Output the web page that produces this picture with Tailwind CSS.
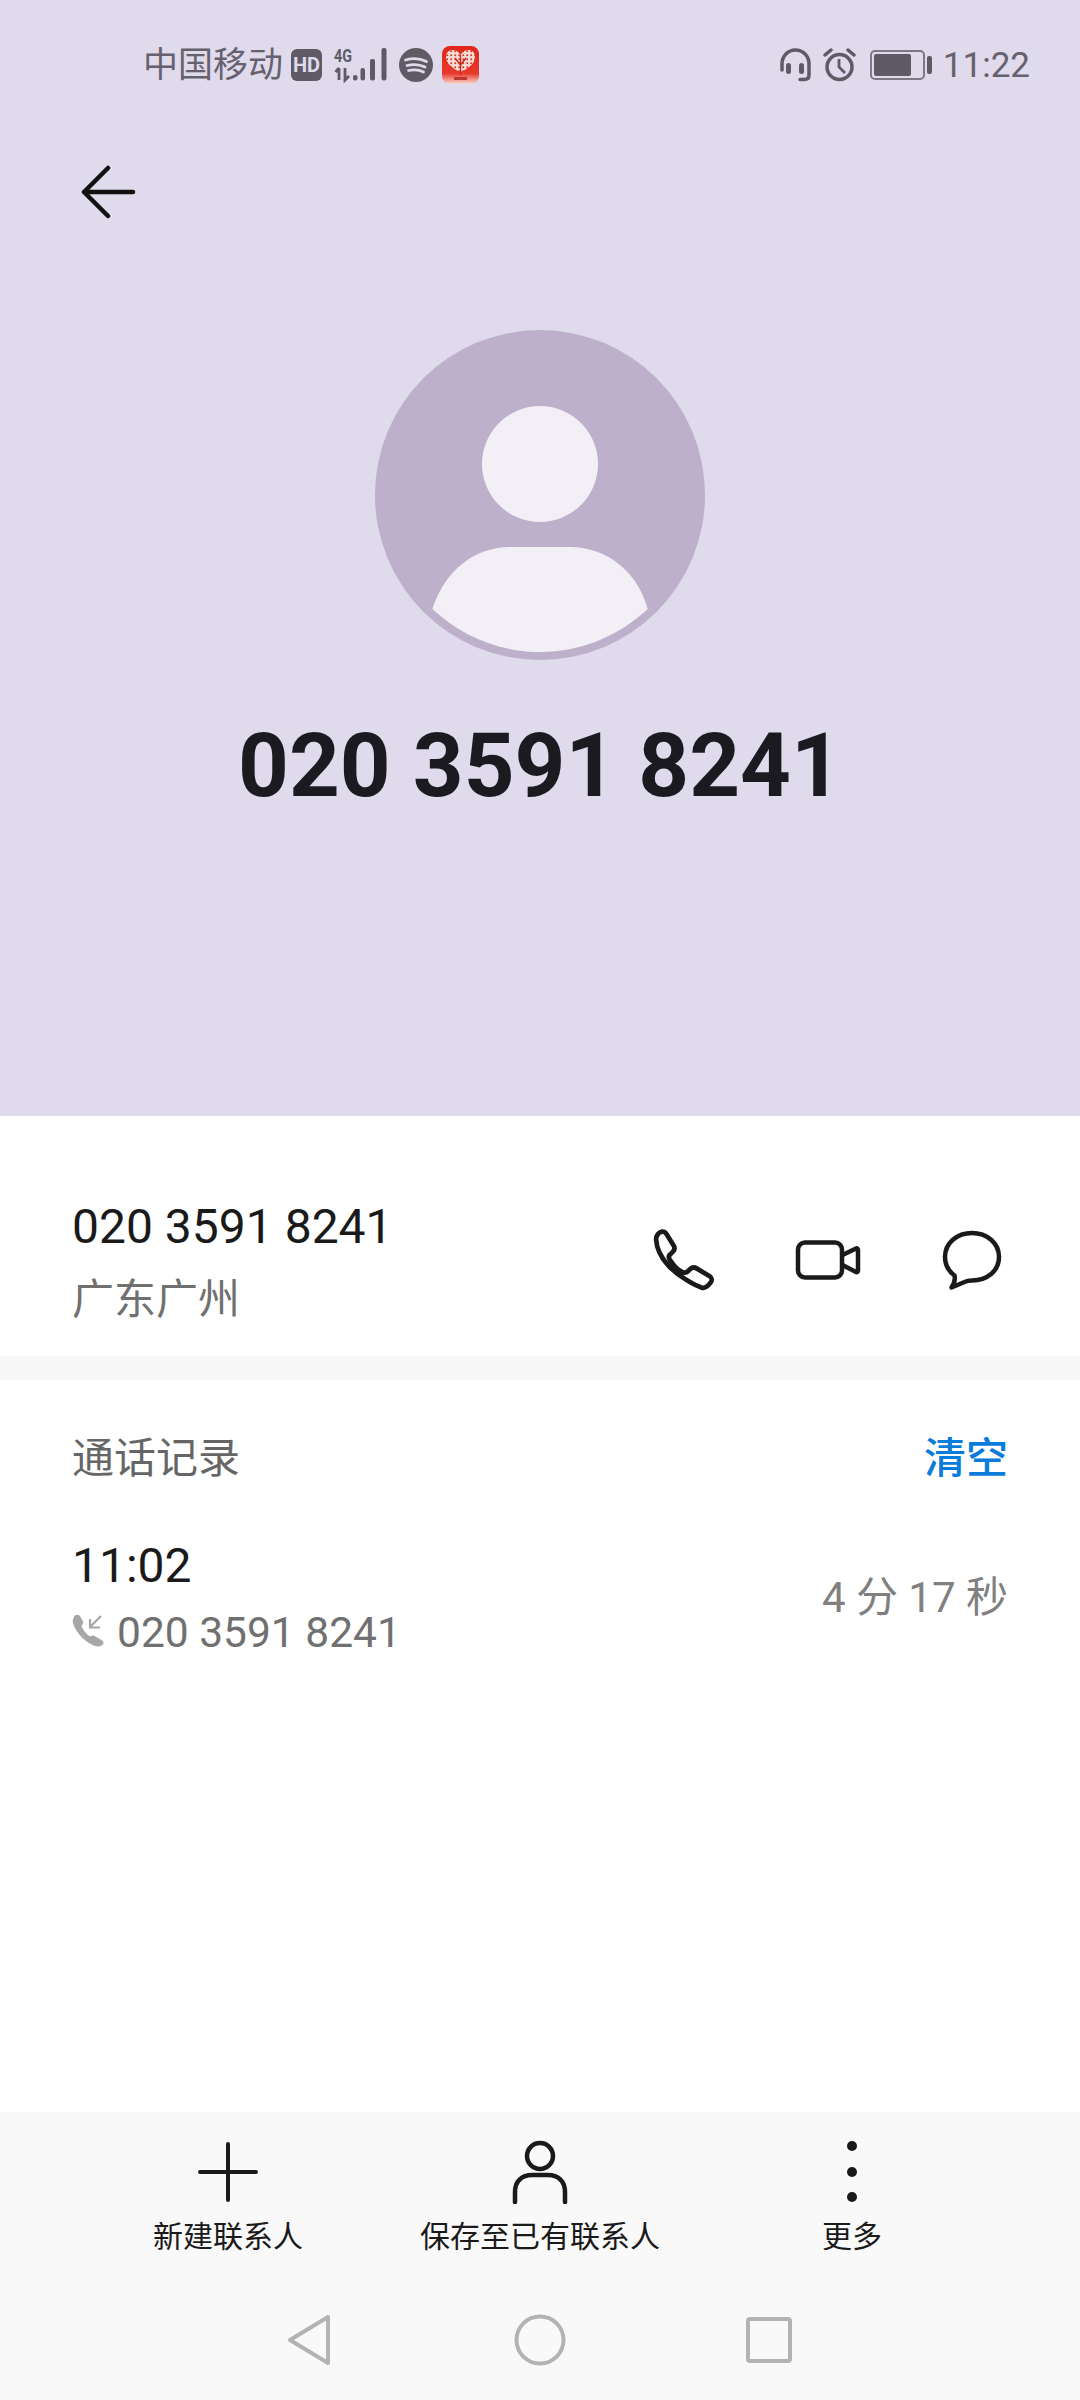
<!DOCTYPE html>
<html lang="zh">

<head>
  <meta charset="utf-8">
  <script src="https://cdn.jsdelivr.net/npm/@tailwindcss/browser@4"></script>
</head>

<body class="w-[1080px] h-[2400px] flex flex-col bg-white overflow-hidden font-['Roboto','Noto_Sans_CJK_SC',sans-serif]">
  <!-- header -->
  <header class="h-[1116px] shrink-0 bg-[#dfdaec] flex flex-col">
    <div class="h-[130px] shrink-0 flex items-center justify-between pl-[143px] pr-[50px] text-[#66616d]">
      <div class="flex items-center">
        <span class="text-[35px] leading-none">中国移动</span>
        <div class="ml-[8px] w-[31px] h-[32px] rounded-[6px] bg-[#5f5b66] flex items-center justify-center text-[#dfdaec] text-[20px] font-bold leading-none">HD</div>
        <svg class="ml-[11px] overflow-visible" width="54" height="36" viewBox="0 0 54 36" fill="#5f5b66">
          <text x="1" y="15" font-family="Roboto" font-size="19" font-weight="700" textLength="18" lengthAdjust="spacingAndGlyphs">4G</text>
          <path d="M6 21v12M2.500 25L6 21M12 21v12l4-4" fill="none" stroke="#5f5b66" stroke-width="2.800" />
          <rect x="20" y="28" width="4.500" height="5.500" rx="2" />
          <rect x="27.500" y="21" width="4.500" height="12.500" rx="2" />
          <rect x="37" y="12" width="5" height="21.500" rx="2" />
          <rect x="48.500" y="1" width="5" height="32.500" rx="2" />
        </svg>
        <svg class="ml-[12px]" width="34" height="34" viewBox="0 0 34 34">
          <circle cx="17" cy="17" r="17" fill="#5f5b66" />
          <path d="M6.500 12c7-2 15-1.500 21 1.500M8 17.500c6-1.500 13-1 18 1.500M9.500 22.500c5-1 11-.7 15 1.500" fill="none" stroke="#dfdaec" stroke-width="2.800" stroke-linecap="round" />
        </svg>
        <svg class="ml-[9px]" width="37" height="38" viewBox="0 0 37 38">
          <defs>
            <linearGradient id="appBg" x1="0" y1="0" x2="0" y2="1">
              <stop offset="0" stop-color="#e0261b" />
              <stop offset=".72" stop-color="#e8392a" />
              <stop offset="1" stop-color="#f8d8d0" />
            </linearGradient>
            <pattern id="appDots" width="4" height="4" patternUnits="userSpaceOnUse">
              <rect width="4" height="4" fill="#f7dcd6" />
              <circle cx="1.200" cy="1.200" r="1" fill="#d83a2c" />
            </pattern>
          </defs>
          <rect width="37" height="38" rx="8" fill="url(#appBg)" />
          <path d="M18.500 26C11 22.500 4 18 4 11c0-4.500 3-7 6.500-7 3.500 0 6.500 2 8 5 1.500-3 4.500-5 8-5C30 4 33 6.500 33 11c0 7-7 11.500-14.500 15z" fill="url(#appDots)" />
          <path d="M18.500 9v20M13 12l5.500 7 5.500-7" stroke="#c92a1d" stroke-width="1.400" fill="none" />
          <rect x="12" y="31" width="13" height="3" fill="#b9372d" />
        </svg>
      </div>
      <div class="flex items-center">
        <svg width="33" height="34" viewBox="0 0 33 34" fill="none" stroke="#5f5b66">
          <path d="M3 22V16C3 8 9 2 16.500 2S30 8 30 16v11c0 3-2 4.500-4.500 4.500H21" stroke-width="3.500" stroke-linecap="round" />
          <rect x="7" y="15" width="5" height="11" rx="2.500" fill="#5f5b66" stroke="none" />
          <rect x="20" y="15" width="5" height="11" rx="2.500" fill="#5f5b66" stroke="none" />
        </svg>
        <svg class="ml-[11px]" width="33" height="34" viewBox="0 0 33 34" fill="none" stroke="#5f5b66" stroke-width="3.500">
          <circle cx="16.500" cy="19" r="12.500" />
          <path d="M16 11v8l6 6" stroke-width="2.800" />
          <path d="M2 7l6-5M31 7l-6-5" stroke-linecap="round" />
        </svg>
        <div class="ml-[14px] flex items-center">
          <div class="w-[55px] h-[30px] rounded-[5px] border-2 border-[#7d7884] p-[2px]">
            <div class="w-[37px] h-full rounded-[2px] bg-[#5f5b66]"></div>
          </div>
          <div class="ml-[2px] w-[5px] h-[18px] rounded-[2px] bg-[#5f5b66]"></div>
        </div>
        <span class="ml-[11px] text-[35px] leading-none">11:22</span>
      </div>
    </div>
    <div class="pl-[80px] pt-[35px]">
      <svg class="block" width="56" height="54" viewBox="0 0 56 54" fill="none" stroke="#111" stroke-width="4.500" stroke-linecap="round" stroke-linejoin="round">
        <path d="M53 27H4M28 3L4 27 28 51" />
      </svg>
    </div>
    <svg class="block mx-auto mt-[111px]" width="330" height="330" viewBox="0 0 330 330">
      <circle cx="165" cy="165" r="165" fill="#bdb0cb" />
      <circle cx="165" cy="134" r="58" fill="#f2eff6" />
      <path d="M57.300 279C70 240 100 217 135 217H195C230 217 262 240 272.700 279C245 305 207 322 165 322C123 322 85 305 57.300 279Z" fill="#f2eff6" />
    </svg>
    <h1 class="mt-[54px] text-center text-[88.700px] leading-[105px] font-bold text-[#1a1a20]">020 3591 8241</h1>
  </header>

  <!-- number row -->
  <section class="h-[240px] shrink-0 flex items-start justify-between px-[72px] pt-[83px]">
    <div>
      <div class="text-[48px] leading-[56px] text-[#1a1a1a]">020 3591 8241</div>
      <div class="mt-[20px] text-[42px] leading-[50px] text-[#707070]">广东广州</div>
    </div>
    <div class="flex gap-[72px] mt-[25px]">
      <svg width="72" height="72" viewBox="0 0 72 72" fill="none" stroke="#1a1a1a" stroke-width="4.500" stroke-linejoin="round">
        <path transform="translate(36 36) scale(1.05) translate(-36 -36)" d="M9.500 17C9 13 12 9.500 15 9C17 8.800 18.500 9.700 19.500 11.500L26.500 23C27.500 25 27 26.500 25.500 28L22.500 31C21 32.500 21.500 34.500 23 36.500C26 41 30 45.500 34.500 47.500C36.500 48.500 38.500 48 40 46.500L42 44.500C44 42.800 46 42.800 48 44L60.500 51.500C63 53 63 56 61 58C59 60.500 56.500 63 53.500 62.500C49 61.500 30 52 20 40C14 33 10 24 9.500 17Z" />
      </svg>
      <svg width="72" height="72" viewBox="0 0 72 72" fill="none" stroke="#1a1a1a" stroke-width="4.500" stroke-linejoin="round">
        <rect x="6" y="18.500" width="44" height="35" rx="7" />
        <path d="M50.500 31L64 24.500C65 24 66 24.700 66 26V46.500C66 48 65 48.500 64 48L50.500 41" />
      </svg>
      <svg width="72" height="72" viewBox="0 0 72 72" fill="none" stroke="#1a1a1a" stroke-width="4.500" stroke-linejoin="round">
        <path d="M36 9C51 9 63 19 63 33C63 47 51 56.500 36 56.500C33 56.500 30.500 57 28.500 58L15.500 63.500C18 60 19.500 56 18.500 51.500C12.500 47 9 40.500 9 33C9 19 21 9 36 9Z" />
      </svg>
    </div>
  </section>

  <div class="h-[24px] shrink-0 bg-[#f7f7f7]"></div>

  <!-- call log -->
  <section class="flex-1 px-[72px]">
    <div class="flex items-center justify-between h-[128px] pt-[28px] text-[42px]">
      <span class="text-[#666666]">通话记录</span>
      <span class="text-[#0a7ddc] font-medium">清空</span>
    </div>
    <div class="mt-[30px] flex items-center justify-between">
      <div>
        <div class="text-[48px] leading-[56px] text-[#1a1a1a]">11:02</div>
        <div class="mt-[14px] flex items-center text-[42.500px] leading-[50px] text-[#707070]">
          <svg class="mr-[12px] -mt-[6px]" width="33" height="33" viewBox="0 0 33 33">
            <path d="M3 1.500C5 0 7.500 1 8.500 3L11 7.500C11.500 9 11 10.500 9.500 11.500C9.500 14 14 20 18 22.500C19.500 21.500 21 21 22.500 22L29.500 26C31.500 27 32 29 31 30.500C29 32.500 26 33 23 32C14 29 4 19 1 9.500C0.300 6.500 1 3.500 3 1.500Z" fill="#a6a6a6" />
            <path d="M29 2L18 13M18 5V13.500H28" fill="none" stroke="#a6a6a6" stroke-width="2.200" />
          </svg>
          <span>020 3591 8241</span>
        </div>
      </div>
      <span class="text-[42px] leading-none text-[#808080]">4 分 17 秒</span>
    </div>
  </section>

  <!-- bottom bar -->
  <footer class="h-[288px] shrink-0 bg-[#f9f9f9] flex flex-col">
    <div class="grid grid-cols-3 px-[72px] pt-[28px] text-[#1a1a1a]">
      <div class="flex flex-col items-center">
        <svg width="64" height="64" viewBox="0 0 64 64" stroke="#1a1a1a" stroke-width="4" stroke-linecap="round">
          <path d="M32 4V60M4 32H60" />
        </svg>
        <span class="mt-[13px] text-[30px] leading-[40px]">新建联系人</span>
      </div>
      <div class="flex flex-col items-center">
        <svg width="64" height="64" viewBox="0 0 64 64" fill="none" stroke="#1a1a1a" stroke-width="4.500" stroke-linecap="round">
          <circle cx="32" cy="16" r="13" />
          <path d="M7 62V52C7 41 14 35 24 35H40C50 35 57 41 57 52V62" />
        </svg>
        <span class="mt-[13px] text-[30px] leading-[40px] whitespace-nowrap">保存至已有联系人</span>
      </div>
      <div class="flex flex-col items-center">
        <svg width="64" height="64" viewBox="0 0 64 64" fill="#1a1a1a">
          <circle cx="32" cy="6" r="5" />
          <circle cx="32" cy="32" r="5" />
          <circle cx="32" cy="57" r="5" />
        </svg>
        <span class="mt-[13px] text-[30px] leading-[40px]">更多</span>
      </div>
    </div>
    <nav class="mt-[57px] flex items-center pl-[287px]">
      <svg width="44" height="52" viewBox="0 0 44 52" fill="none" stroke="#b3b3b3" stroke-width="4" stroke-linejoin="round">
        <path d="M41 3V49L3 26Z" />
      </svg>
      <svg class="ml-[183px]" width="52" height="52" viewBox="0 0 52 52" fill="none" stroke="#b3b3b3" stroke-width="4">
        <circle cx="26" cy="26" r="23.500" />
      </svg>
      <svg class="ml-[180px]" width="46" height="46" viewBox="0 0 46 46" fill="none" stroke="#b3b3b3" stroke-width="4" stroke-linejoin="round">
        <rect x="2" y="2" width="42" height="42" rx="2" />
      </svg>
    </nav>
  </footer>
</body>

</html>
